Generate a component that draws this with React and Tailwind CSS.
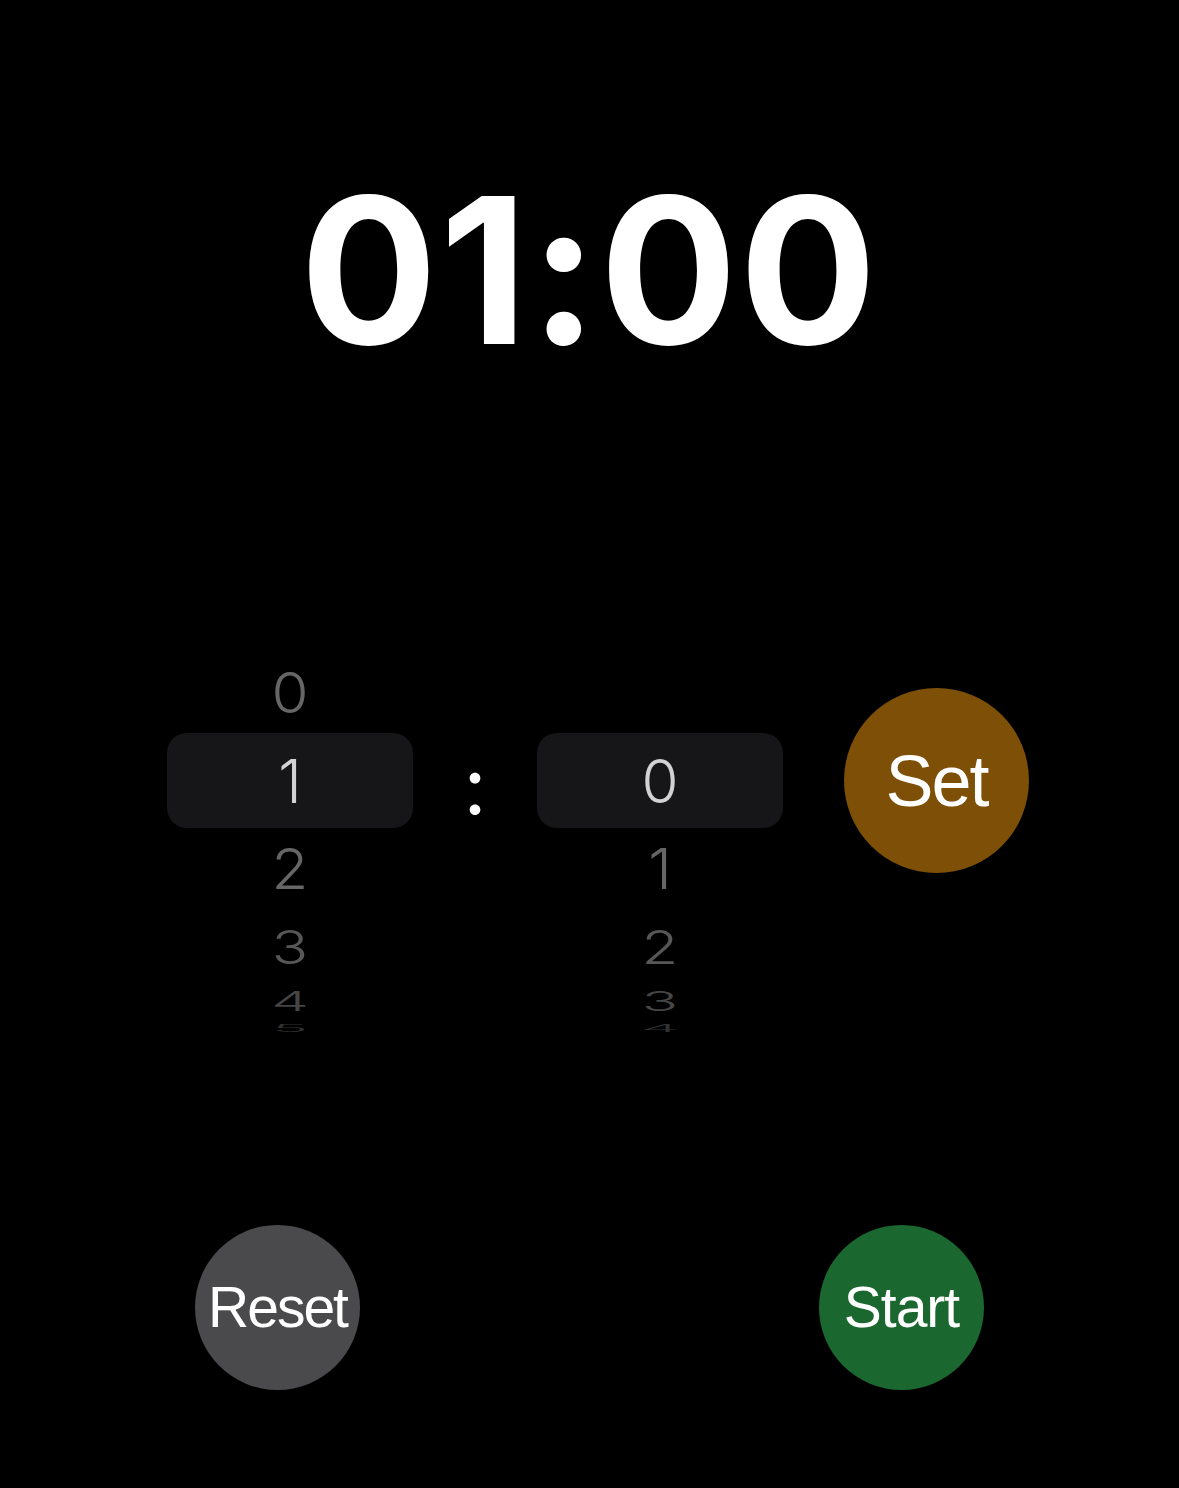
import React from "react";

const BELOW = [
  { h: "h-[87px]", c: "text-[#666666]", s: "scale-y-[0.94]" },
  { h: "h-[71px]", c: "text-[#575757]", s: "scale-y-[0.77]" },
  { h: "h-[37px]", c: "text-[#454545]", s: "scale-y-[0.45]" },
  { h: "h-[17px]", c: "text-[#313131]", s: "scale-y-[0.16]" },
];

function Wheel({ above, selected, below }) {
  return (
    <div className="flex w-[246px] flex-col">
      <div className="flex h-[212px] flex-col justify-end">
        {above.map((n) => (
          <div key={n} className="flex h-[90px] items-center justify-center">
            <span className="scale-y-[0.94] text-[#666666]">{n}</span>
          </div>
        ))}
      </div>
      <div className="relative flex h-[87px] items-center justify-center">
        <div className="absolute inset-x-0 -top-[4px] -bottom-[4px] rounded-[20px] bg-[#161618]" />
        <span className="relative text-[#d2d2d2]">{selected}</span>
      </div>
      <div className="flex h-[212px] flex-col overflow-hidden">
        {below.map((n, i) => (
          <div key={n} className={`flex ${BELOW[i].h} shrink-0 items-center justify-center`}>
            <span className={`${BELOW[i].s} ${BELOW[i].c}`}>{n}</span>
          </div>
        ))}
      </div>
    </div>
  );
}

export default function App() {
  return (
    <div className="flex h-[1488px] w-full flex-col bg-black font-['Inter',sans-serif] text-white">
      <div className="mt-[168px] flex h-[204px] items-center justify-center text-[204px] font-bold leading-none tracking-[2px]">
        01:00
      </div>

      <div className="mt-[153px] flex items-center pl-[167px] text-[60px] font-light leading-none">
        <Wheel above={["0"]} selected="1" below={["2", "3", "4", "5"]} />
        <div className="flex w-[124px] translate-y-[4px] items-center justify-center text-[80px] font-normal leading-none text-white">
          :
        </div>
        <div className="w-[245px]">
          <Wheel above={[]} selected="0" below={["1", "2", "3", "4"]} />
        </div>
        <button className="ml-[62px] flex h-[185px] w-[185px] items-center justify-center rounded-full bg-[#7e4f06] font-['Liberation_Sans',sans-serif] text-[72px] font-normal tracking-[-2px] text-white">
          Set
        </button>
      </div>

      <div className="mt-[189px] flex justify-between px-[195px] font-['Liberation_Sans',sans-serif] text-[57px] leading-none text-white">
        <button className="flex h-[165px] w-[165px] items-center justify-center rounded-full bg-[#4a4a4c] tracking-[-2px]">
          Reset
        </button>
        <button className="flex h-[165px] w-[165px] items-center justify-center rounded-full bg-[#1a672f] tracking-[-1px]">
          Start
        </button>
      </div>
    </div>
  );
}
